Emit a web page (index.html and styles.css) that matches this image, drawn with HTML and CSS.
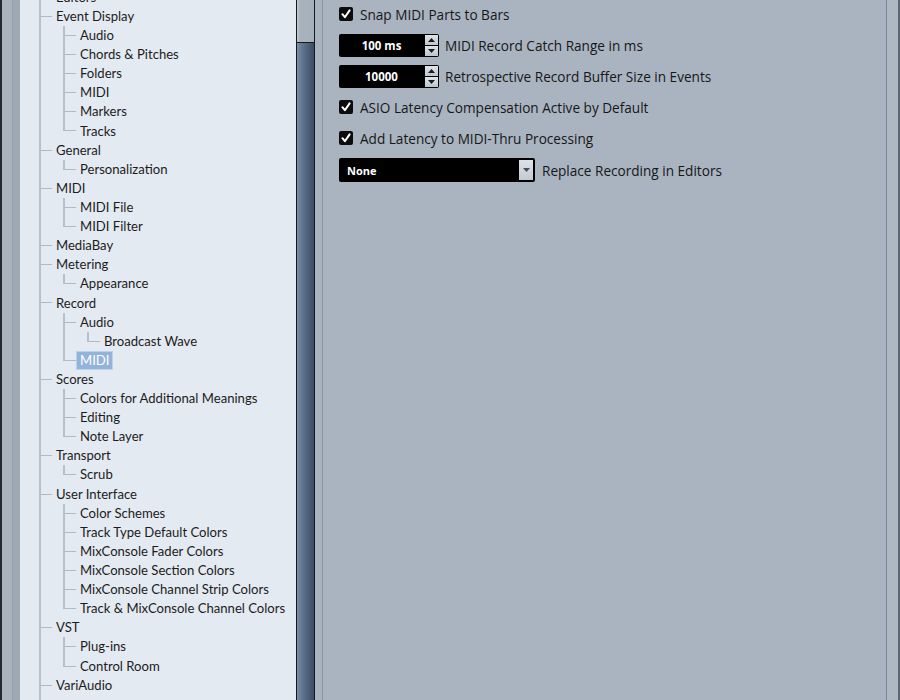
FILE: index.html
```html
<!DOCTYPE html>
<html lang="en">
<head>
<meta charset="utf-8">
<title>Preferences – Record – MIDI</title>
<link rel="stylesheet" href="styles.css">
</head>
<body>
  <div class="edge-dark"></div>
  <div class="rail-a"></div>
  <div class="rail-b"></div>

  <nav class="tree">
    <div class="tree-list">
      <div class="row"><i class="c tee"></i><span class="lbl">Editors</span></div>
      <div class="row"><i class="c tee"></i><span class="lbl">Event Display</span></div>
      <div class="row"><i class="c pipe"></i><i class="c tee"></i><span class="lbl">Audio</span></div>
      <div class="row"><i class="c pipe"></i><i class="c tee"></i><span class="lbl">Chords &amp; Pitches</span></div>
      <div class="row"><i class="c pipe"></i><i class="c tee"></i><span class="lbl">Folders</span></div>
      <div class="row"><i class="c pipe"></i><i class="c tee"></i><span class="lbl">MIDI</span></div>
      <div class="row"><i class="c pipe"></i><i class="c tee"></i><span class="lbl">Markers</span></div>
      <div class="row"><i class="c pipe"></i><i class="c elbow"></i><span class="lbl">Tracks</span></div>
      <div class="row"><i class="c tee"></i><span class="lbl">General</span></div>
      <div class="row"><i class="c pipe"></i><i class="c elbow"></i><span class="lbl">Personalization</span></div>
      <div class="row"><i class="c tee"></i><span class="lbl">MIDI</span></div>
      <div class="row"><i class="c pipe"></i><i class="c tee"></i><span class="lbl">MIDI File</span></div>
      <div class="row"><i class="c pipe"></i><i class="c elbow"></i><span class="lbl">MIDI Filter</span></div>
      <div class="row"><i class="c tee"></i><span class="lbl">MediaBay</span></div>
      <div class="row"><i class="c tee"></i><span class="lbl">Metering</span></div>
      <div class="row"><i class="c pipe"></i><i class="c elbow"></i><span class="lbl">Appearance</span></div>
      <div class="row"><i class="c tee"></i><span class="lbl">Record</span></div>
      <div class="row"><i class="c pipe"></i><i class="c tee"></i><span class="lbl">Audio</span></div>
      <div class="row"><i class="c pipe"></i><i class="c pipe"></i><i class="c elbow"></i><span class="lbl">Broadcast Wave</span></div>
      <div class="row"><i class="c pipe"></i><i class="c elbow"></i><span class="lbl selected">MIDI</span></div>
      <div class="row"><i class="c tee"></i><span class="lbl">Scores</span></div>
      <div class="row"><i class="c pipe"></i><i class="c tee"></i><span class="lbl">Colors for Additional Meanings</span></div>
      <div class="row"><i class="c pipe"></i><i class="c tee"></i><span class="lbl">Editing</span></div>
      <div class="row"><i class="c pipe"></i><i class="c elbow"></i><span class="lbl">Note Layer</span></div>
      <div class="row"><i class="c tee"></i><span class="lbl">Transport</span></div>
      <div class="row"><i class="c pipe"></i><i class="c elbow"></i><span class="lbl">Scrub</span></div>
      <div class="row"><i class="c tee"></i><span class="lbl">User Interface</span></div>
      <div class="row"><i class="c pipe"></i><i class="c tee"></i><span class="lbl">Color Schemes</span></div>
      <div class="row"><i class="c pipe"></i><i class="c tee"></i><span class="lbl">Track Type Default Colors</span></div>
      <div class="row"><i class="c pipe"></i><i class="c tee"></i><span class="lbl">MixConsole Fader Colors</span></div>
      <div class="row"><i class="c pipe"></i><i class="c tee"></i><span class="lbl">MixConsole Section Colors</span></div>
      <div class="row"><i class="c pipe"></i><i class="c tee"></i><span class="lbl">MixConsole Channel Strip Colors</span></div>
      <div class="row"><i class="c pipe"></i><i class="c elbow"></i><span class="lbl">Track &amp; MixConsole Channel Colors</span></div>
      <div class="row"><i class="c tee"></i><span class="lbl">VST</span></div>
      <div class="row"><i class="c pipe"></i><i class="c tee"></i><span class="lbl">Plug-ins</span></div>
      <div class="row"><i class="c pipe"></i><i class="c elbow"></i><span class="lbl">Control Room</span></div>
      <div class="row"><i class="c tee"></i><span class="lbl">VariAudio</span></div>
      <div class="row"><i class="c pipe"></i></div>
    </div>
  </nav>

  <div class="vscroll">
    <div class="track"></div>
    <div class="thumb"></div>
  </div>
  <div class="sep"></div>

  <main class="main">
    <div class="opt r1">
      <span class="check"><svg width="14" height="14" viewBox="0 0 14 14"><polyline points="3.4,7.2 5.9,10.2 10.6,3.4" fill="none" stroke="#fff" stroke-width="2" stroke-linecap="round" stroke-linejoin="round"/></svg></span>
      <span class="txt">Snap MIDI Parts to Bars</span>
    </div>

    <div class="opt r2">
      <div class="spin">
        <span class="spin-val">100 ms</span>
        <span class="spin-btns">
          <span class="sb"><svg width="7" height="4" viewBox="0 0 7 4"><polygon points="0,4 3.5,0 7,4" fill="#1b1b1b"/></svg></span>
          <span class="sb"><svg width="7" height="4" viewBox="0 0 7 4"><polygon points="0,0 7,0 3.5,4" fill="#1b1b1b"/></svg></span>
        </span>
      </div>
      <span class="txt">MIDI Record Catch Range in ms</span>
    </div>

    <div class="opt r3">
      <div class="spin">
        <span class="spin-val">10000</span>
        <span class="spin-btns">
          <span class="sb"><svg width="7" height="4" viewBox="0 0 7 4"><polygon points="0,4 3.5,0 7,4" fill="#1b1b1b"/></svg></span>
          <span class="sb"><svg width="7" height="4" viewBox="0 0 7 4"><polygon points="0,0 7,0 3.5,4" fill="#1b1b1b"/></svg></span>
        </span>
      </div>
      <span class="txt">Retrospective Record Buffer Size in Events</span>
    </div>

    <div class="opt r4">
      <span class="check"><svg width="14" height="14" viewBox="0 0 14 14"><polyline points="3.4,7.2 5.9,10.2 10.6,3.4" fill="none" stroke="#fff" stroke-width="2" stroke-linecap="round" stroke-linejoin="round"/></svg></span>
      <span class="txt">ASIO Latency Compensation Active by Default</span>
    </div>

    <div class="opt r5">
      <span class="check"><svg width="14" height="14" viewBox="0 0 14 14"><polyline points="3.4,7.2 5.9,10.2 10.6,3.4" fill="none" stroke="#fff" stroke-width="2" stroke-linecap="round" stroke-linejoin="round"/></svg></span>
      <span class="txt">Add Latency to MIDI-Thru Processing</span>
    </div>

    <div class="opt r6">
      <div class="combo">
        <span class="combo-val">None</span>
        <span class="combo-btn"><svg width="7" height="4" viewBox="0 0 7 4"><polygon points="0,0 7,0 3.5,4" fill="#4a4f55"/></svg></span>
      </div>
      <span class="txt">Replace Recording in Editors</span>
    </div>
  </main>

  <div class="frame-r"></div>
</body>
</html>
```

FILE: styles.css
```css
html, body {
  margin: 0;
  padding: 0;
}

body {
  width: 900px;
  height: 700px;
  overflow: hidden;
  display: flex;
  background: #a9b4c0;
  font-family: Lato, "Open Sans", sans-serif;
  font-size: 13.1px;
  color: #161616;
}

/* window frame on the left */
.edge-dark {
  width: 2px;
  background: #23292f;
}

.rail-a {
  width: 10px;
  background: #a9b3bd;
}

.rail-b {
  width: 8px;
  box-sizing: border-box;
  background: #9ea9b4;
  border-left: 1px solid #96a1ac;
}

/* preference category tree */
.tree {
  width: 276px;
  flex: none;
  box-sizing: border-box;
  padding-left: 8px;
  background: #e4eaf1;
  overflow: hidden;
}

.tree-list {
  margin-top: -12.3px;
}

.row {
  display: flex;
  height: 19.12px;
  color: #1c1c1c;
  white-space: nowrap;
}

.c {
  width: 24px;
  flex: none;
}

.pipe {
  background: linear-gradient(#b7c0ca, #b7c0ca) 11px 0 / 2px 100% no-repeat;
}

.tee {
  background:
    linear-gradient(#b7c0ca, #b7c0ca) 11px 0 / 2px 100% no-repeat,
    linear-gradient(#b1bac4, #b1bac4) 13px 9px / 11px 1px no-repeat;
}

.elbow {
  background:
    linear-gradient(#b7c0ca, #b7c0ca) 11px 0 / 2px 10px no-repeat,
    linear-gradient(#b1bac4, #b1bac4) 13px 9px / 11px 1px no-repeat;
}

.lbl {
  align-self: center;
  height: 17px;
  line-height: 17px;
  padding: 0 3px;
  border: 1px solid transparent;
}

.lbl.selected {
  background: #94b3db;
  border-color: #bcd1ea;
  color: #ffffff;
}

/* tree scrollbar */
.vscroll {
  width: 19px;
  flex: none;
  box-sizing: border-box;
  border-left: 1px solid #15191d;
  border-right: 1px solid #15191d;
  display: flex;
  flex-direction: column;
}

.track {
  height: 42px;
  background: linear-gradient(90deg, #c0c8d0, #a8b2bc 3px, #a6b0ba);
}

.thumb {
  flex: 1;
  border-top: 1px solid #15191d;
  background: linear-gradient(90deg, #7a8ea6, #5d728c 35%, #415269 90%, #3b4b61);
}

.sep {
  width: 8px;
  flex: none;
  box-sizing: border-box;
  background: #a9b3be;
  border-right: 1px solid #8995a1;
}

/* settings page */
.main {
  flex: 1;
  padding: 4px 0 0 16px;
  font-family: "Open Sans", sans-serif;
  font-size: 13.6px;
}

.opt {
  display: flex;
  align-items: center;
  gap: 7px;
}

.r1 { height: 20px; }
.r2 { height: 23px; margin-top: 10px; gap: 6px; }
.r3 { height: 23px; margin-top: 8px; gap: 6px; }
.r4 { height: 20px; margin-top: 9px; }
.r5 { height: 20px; margin-top: 11px; }
.r6 { height: 24px; margin-top: 10px; }

.txt {
  white-space: nowrap;
  color: #171717;
}

.check {
  width: 14px;
  height: 14px;
  flex: none;
  background: #0c0c0c;
  border-radius: 2px;
  display: flex;
}

.spin {
  display: flex;
  height: 23px;
}

.spin-val {
  width: 85px;
  background: #000;
  border-radius: 2px 0 0 2px;
  color: #fff;
  font-weight: 700;
  font-size: 11.5px;
  display: flex;
  align-items: center;
  justify-content: center;
}

.spin-btns {
  width: 15px;
  box-sizing: border-box;
  background: #000;
  padding: 1px;
  border-radius: 0 2px 2px 0;
  display: flex;
  flex-direction: column;
  gap: 1px;
}

.sb {
  flex: 1;
  background: linear-gradient(#dfe4e9, #bdc5cd);
  display: flex;
  align-items: center;
  justify-content: center;
}

.combo {
  width: 196px;
  height: 24px;
  box-sizing: border-box;
  background: #000;
  border-radius: 2px;
  display: flex;
  align-items: center;
  padding: 2px;
}

.combo-val {
  flex: 1;
  padding-left: 6px;
  color: #fff;
  font-weight: 700;
  font-size: 11px;
}

.combo-btn {
  width: 14px;
  align-self: stretch;
  background: linear-gradient(#dde2e7, #c3cad2);
  display: flex;
  align-items: center;
  justify-content: center;
}

/* window frame on the right */
.frame-r {
  width: 14px;
  flex: none;
  box-sizing: border-box;
  border-left: 1px solid #7b8692;
  border-right: 2px solid #5c6672;
  background: #aeb8c3;
}
```
